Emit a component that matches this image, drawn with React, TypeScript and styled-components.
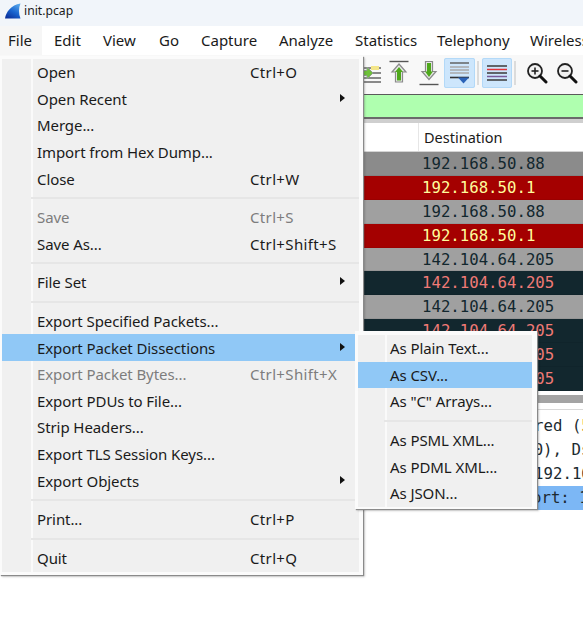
import React from "react";
import styled, { createGlobalStyle } from "styled-components";

const Global = createGlobalStyle`
  html, body { margin: 0; padding: 0; background: #fff; }
  * { box-sizing: border-box; }
`;

const UI = `"Noto Sans", "Open Sans", sans-serif`;
const MONO = `"DejaVu Sans Mono", "Liberation Mono", monospace`;

const Page = styled.div`
  position: relative;
  width: 583px;
  height: 642px;
  overflow: hidden;
  background: #fff;
  font-family: ${UI};
  color: #1a1a1a;
`;
const TitleBar = styled.div`
  height: 26px;
  background: #f1f5fa;
  display: flex;
  align-items: flex-start;
  gap: 3px;
  padding: 3px 0 0 5px;
  font-size: 12.2px;
  line-height: 16px;
`;
const MenuBar = styled.div`
  height: 29px;
  background: #fff;
  display: flex;
  align-items: stretch;
  white-space: nowrap;
`;
const MenuBarItem = styled.div<{ $w: number; $active?: boolean }>`
  flex: none;
  width: ${(p) => p.$w}px;
  margin-right: ${(p) => (p.$active ? 4 : 0)}px;
  padding: 0 0 0 8px;
  font-size: 15px;
  line-height: 28px;
  background: ${(p) => (p.$active ? "#f6f6f6" : "transparent")};
`;
const Toolbar = styled.div`
  height: 39px;
  background: #f8f8f8;
  display: flex;
  align-items: flex-start;
  padding: 3px 0 0 359px;
`;
const ToolIcon = styled.div<{ $w?: number; $active?: boolean }>`
  flex: none;
  width: ${(p) => p.$w ?? 30}px;
  height: 30px;
  display: flex;
  align-items: center;
  justify-content: center;
  border-radius: 2px;
  background: ${(p) => (p.$active ? "#cde6fc" : "transparent")};
  outline: ${(p) => (p.$active ? "1px solid #b3d9f8" : "none")};
  outline-offset: -1px;
`;
const ToolSep = styled.div`
  flex: none;
  width: 2px;
  height: 24px;
  margin: 3px 3px 0 2px;
  background: #dcdcdc;
`;
const FilterBar = styled.div`
  height: 25px;
  background: #afffaf;
  border-top: 1px solid #5a5a5a;
  border-bottom: 2px solid #6a6a6a;
`;
const Header = styled.div`
  height: 33px;
  background: #fff;
  border-top: 4px solid #cfcfcf;
  border-bottom: 1px solid #d4d4d4;
  padding-left: 418px;
  display: flex;
`;
const HeaderCell = styled.div`
  border-left: 1px solid #e6e6e6;
  padding-left: 5px;
  font-size: 14.5px;
  line-height: 29px;
`;
const PacketList = styled.div`
  display: flex;
  flex-direction: column;
`;
const Row = styled.div<{ $kind: "first" | "gray" | "red" | "dark" }>`
  height: 23.9px;
  padding-left: 422px;
  font-family: ${MONO};
  font-size: 15.7px;
  line-height: 24px;
  white-space: nowrap;
  overflow: hidden;
  border-bottom: 1px solid rgba(0, 0, 0, 0.06);
  background: ${(p) =>
    ({ first: "#8b8b8b", gray: "#a0a0a0", red: "#a40000", dark: "#12272e" })[p.$kind]};
  color: ${(p) =>
    ({ first: "#12272e", gray: "#12272e", red: "#fffc9c", dark: "#f07a76" })[p.$kind]};
`;
const HScroll = styled.div`
  height: 8px;
  margin-top: 4px;
  background: #a4a4a4;
`;
const Detail = styled.div`
  margin-top: 6px;
  border-top: 1px solid #d8d8d8;
  padding-top: 4px;
  display: flex;
  flex-direction: column;
`;
const DetailLine = styled.div<{ $indent: number; $selected?: boolean }>`
  height: 24px;
  padding-left: ${(p) => p.$indent}px;
  font-family: ${MONO};
  font-size: 15.7px;
  line-height: 24px;
  white-space: nowrap;
  overflow: hidden;
  color: #1c2a30;
  background: ${(p) => (p.$selected ? "#7cb7f5" : "transparent")};
`;
const Amber = styled.span`
  color: #c89030;
`;

const Popup = styled.div<{ $top: number; $left: number; $width: number; $gutter: number }>`
  position: absolute;
  top: ${(p) => p.$top}px;
  left: ${(p) => p.$left}px;
  width: ${(p) => p.$width}px;
  background:
    linear-gradient(
      to right,
      #f0f0f0 ${(p) => p.$gutter}px,
      #fafafa ${(p) => p.$gutter}px ${(p) => p.$gutter + 2}px,
      #f0f0f0 ${(p) => p.$gutter + 2}px
    ) content-box,
    #fbfbfb;
  box-shadow: 1px 1px 1px #8a8a8a, 2px 2px 2px rgba(0, 0, 0, 0.18);
  display: flex;
  flex-direction: column;
`;
const MainMenu = styled(Popup)`
  padding: 3px 4px 3px 2px;
  height: 519px;
`;
const SubMenu = styled(Popup)`
  padding: 4px 5px 2px 3px;
  height: 178px;
`;
const Item = styled.div<{ $on?: boolean; $off?: boolean; $pad: number }>`
  flex: none;
  height: 26.6px;
  display: grid;
  grid-template-columns: 213px 1fr auto;
  align-items: center;
  padding: 0 14px 0 ${(p) => p.$pad}px;
  font-size: 15px;
  letter-spacing: -0.08px;
  line-height: 26px;
  white-space: nowrap;
  color: ${(p) => (p.$off ? "#7d7d7d" : "#1a1a1a")};
  background: ${(p) => (p.$on ? "#90c8f6" : "transparent")};
`;
const Keys = styled.span`
  letter-spacing: 0.35px;
`;
const Arrow = styled.span`
  width: 0;
  height: 0;
  border-left: 5px solid #111;
  border-top: 4.5px solid transparent;
  border-bottom: 4.5px solid transparent;
  margin-top: -2px;
`;
const Separator = styled.div<{ $left: number }>`
  flex: none;
  height: 12px;
  margin-left: ${(p) => p.$left}px;
  display: flex;
  align-items: center;
  &::before {
    content: "";
    flex: 1;
    height: 2px;
    background: #e6e6e6;
  }
`;

const Fin = () => (
  <svg width="16" height="16" viewBox="0 0 16 16">
    <defs>
      <linearGradient id="fin" x1="0.8" y1="0" x2="0.2" y2="1">
        <stop offset="0" stopColor="#5aa8ea" />
        <stop offset="0.5" stopColor="#1a66d0" />
        <stop offset="1" stopColor="#0a2f9a" />
      </linearGradient>
    </defs>
    <path d="M0 15.500C1 9 6 2 15.500.5c-2 4.500-2 10.500 0 15z" fill="url(#fin)" />
  </svg>
);

const GoIcon = () => (
  <svg width="22" height="24" viewBox="0 0 22 24">
    <path d="M2 7h18M2 12h18M2 17h18M2 21h18" stroke="#666" strokeWidth="1.4" />
    <rect x="10" y="5" width="8" height="4" fill="#f4e68a" />
    <path d="M0 9.500h6V6l6 6-6 6v-3.500H0z" fill="#6fc23a" stroke="#8f9f8f" />
  </svg>
);
const UpIcon = () => (
  <svg width="22" height="26" viewBox="0 0 22 26">
    <path d="M1.500 1.500h19" stroke="#555" strokeWidth="1.400" />
    <path d="M11 4l7 8h-3.500v10h-7V12H4z" fill="#e8e8e8" stroke="#8a8a8a" strokeWidth="1.200" />
    <path d="M11 7l4 5h-2v8.500H9V12H7z" fill="#4fa81c" />
  </svg>
);
const DownIcon = () => (
  <svg width="22" height="26" viewBox="0 0 22 26">
    <path d="M1.500 24.500h19" stroke="#555" strokeWidth="1.400" />
    <path d="M7.500 1.500h7v10H18l-7 8-7-8h3.500z" fill="#e8e8e8" stroke="#8a8a8a" strokeWidth="1.200" />
    <path d="M9 3h4v8.500h2L11 17l-4-5.500h2z" fill="#4fa81c" />
  </svg>
);
const LastIcon = () => (
  <svg width="20" height="22" viewBox="0 0 20 22">
    <path d="M0 1h19" stroke="#5a5a5a" strokeWidth="1.400" />
    <path d="M0 5h19M0 8h19M0 11h19" stroke="#a9a9a9" strokeWidth="1.400" />
    <path d="M0 15.500h19" stroke="#333" strokeWidth="1.600" />
    <path d="M8 15.500h11l-5.500 6z" fill="#2b63b8" />
  </svg>
);
const ColorIcon = () => (
  <svg width="20" height="18" viewBox="0 0 20 18">
    <path d="M0 2h20" stroke="#3a3a3a" strokeWidth="1.500" />
    <path d="M0 5.500h20" stroke="#e0333a" strokeWidth="1.500" />
    <path d="M0 9h20" stroke="#3a3a3a" strokeWidth="1.500" />
    <path d="M0 12.500h20" stroke="#7a5a9a" strokeWidth="1.500" />
    <path d="M0 16h20" stroke="#3a3a3a" strokeWidth="1.500" />
  </svg>
);
const ZoomIcon = ({ plus }: { plus?: boolean }) => (
  <svg width="22" height="22" viewBox="0 0 22 22">
    <circle cx="9" cy="9" r="7" fill="#f2f2f2" stroke="#222" strokeWidth="1.800" />
    <path d="M14 14l6 6" stroke="#111" strokeWidth="3" strokeLinecap="round" />
    <path d="M5.500 9h7" stroke="#222" strokeWidth="1.600" />
    {plus && <path d="M9 5.500v7" stroke="#222" strokeWidth="1.600" />}
  </svg>
);

type Entry =
  | "sep"
  | { label: string; keys?: string; sub?: boolean; off?: boolean; on?: boolean };

const mainEntries: Entry[] = [
  { label: "Open", keys: "Ctrl+O" },
  { label: "Open Recent", sub: true },
  { label: "Merge..." },
  { label: "Import from Hex Dump..." },
  { label: "Close", keys: "Ctrl+W" },
  "sep",
  { label: "Save", keys: "Ctrl+S", off: true },
  { label: "Save As...", keys: "Ctrl+Shift+S" },
  "sep",
  { label: "File Set", sub: true },
  "sep",
  { label: "Export Specified Packets..." },
  { label: "Export Packet Dissections", sub: true, on: true },
  { label: "Export Packet Bytes...", keys: "Ctrl+Shift+X", off: true },
  { label: "Export PDUs to File..." },
  { label: "Strip Headers..." },
  { label: "Export TLS Session Keys..." },
  { label: "Export Objects", sub: true },
  "sep",
  { label: "Print...", keys: "Ctrl+P" },
  "sep",
  { label: "Quit", keys: "Ctrl+Q" },
];

const subEntries: Entry[] = [
  { label: "As Plain Text..." },
  { label: "As CSV...", on: true },
  { label: 'As "C" Arrays...' },
  "sep",
  { label: "As PSML XML..." },
  { label: "As PDML XML..." },
  { label: "As JSON..." },
];

const renderEntries = (entries: Entry[], pad: number, sepLeft: number) =>
  entries.map((e, i) =>
    e === "sep" ? (
      <Separator key={i} $left={sepLeft} />
    ) : (
      <Item key={i} $pad={pad} $on={e.on} $off={e.off}>
        <span>{e.label}</span>
        <Keys>{e.keys}</Keys>
        {e.sub ? <Arrow /> : <span />}
      </Item>
    )
  );

const barItems: [string, number][] = [
  ["File", 42],
  ["Edit", 49],
  ["View", 56],
  ["Go", 42],
  ["Capture", 78],
  ["Analyze", 76],
  ["Statistics", 82],
  ["Telephony", 93],
  ["Wireless", 90],
];

const rows: [string, "first" | "gray" | "red" | "dark"][] = [
  ["192.168.50.88", "first"],
  ["192.168.50.1", "red"],
  ["192.168.50.88", "gray"],
  ["192.168.50.1", "red"],
  ["142.104.64.205", "gray"],
  ["142.104.64.205", "dark"],
  ["142.104.64.205", "gray"],
  ["142.104.64.205", "dark"],
  ["142.104.64.205", "dark"],
  ["142.104.64.205", "dark"],
];

export default function App() {
  return (
    <Page>
      <Global />
      <TitleBar>
        <Fin />
        <span>init.pcap</span>
      </TitleBar>
      <MenuBar>
        {barItems.map(([t, w], i) => (
          <MenuBarItem key={t} $w={w} $active={i === 0}>
            {t}
          </MenuBarItem>
        ))}
      </MenuBar>
      <Toolbar>
        <ToolIcon $w={25}><GoIcon /></ToolIcon>
        <ToolIcon><UpIcon /></ToolIcon>
        <ToolIcon><DownIcon /></ToolIcon>
        <ToolIcon $w={31} $active><LastIcon /></ToolIcon>
        <ToolSep />
        <ToolIcon $active><ColorIcon /></ToolIcon>
        <ToolSep />
        <ToolIcon $w={36}><ZoomIcon plus /></ToolIcon>
        <ToolIcon $w={24}><ZoomIcon /></ToolIcon>
      </Toolbar>
      <FilterBar />
      <Header>
        <HeaderCell>Destination</HeaderCell>
      </Header>
      <PacketList>
        {rows.map(([t, k], i) => (
          <Row key={i} $kind={k}>{t}</Row>
        ))}
      </PacketList>
      <HScroll />
      <Detail>
        <DetailLine $indent={43}>
          Frame 6: 74 bytes on wire (592 bits), 74 bytes captured (<Amber>592</Amber> bits)
        </DetailLine>
        <DetailLine $indent={52}>
          Ethernet II, Src: VMware_c0:00:00 (00:50:56:c0:00:00), Dst: 00:0c:29
        </DetailLine>
        <DetailLine $indent={213}>
          Internet Protocol Version 4, Src: 192.168.50.88
        </DetailLine>
        <DetailLine $indent={192} $selected>
          Transmission Control Protocol, Src Port: 1443
        </DetailLine>
      </Detail>
      <MainMenu $top={56} $left={0} $width={363} $gutter={29}>
        {renderEntries(mainEntries, 35, 29)}
      </MainMenu>
      <SubMenu $top={331} $left={355} $width={182} $gutter={27}>
        {renderEntries(subEntries, 32, 26)}
      </SubMenu>
    </Page>
  );
}
